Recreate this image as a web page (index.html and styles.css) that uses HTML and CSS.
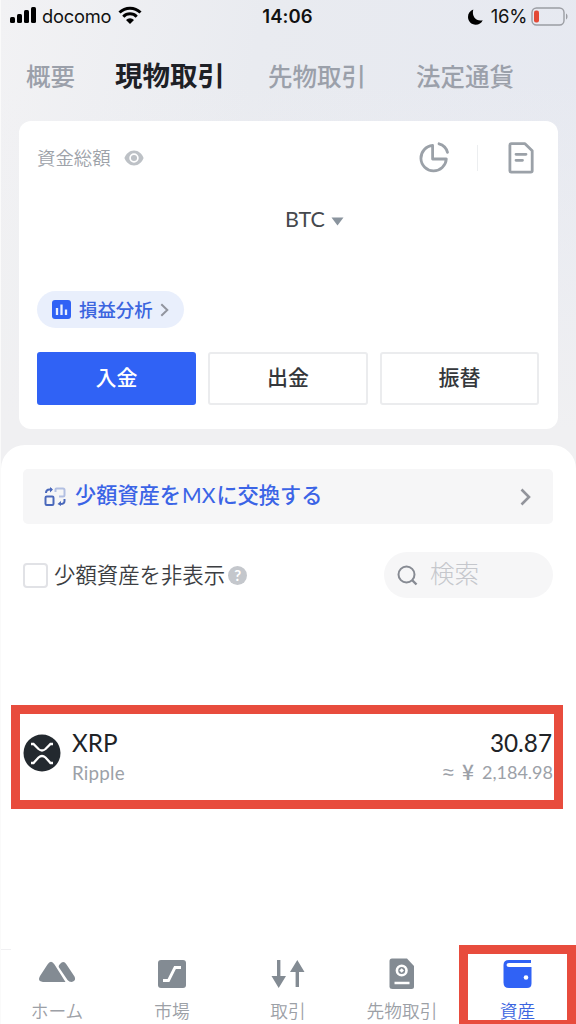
FILE: index.html
```html
<!DOCTYPE html>
<html lang="ja">
<head>
<meta charset="utf-8">
<meta name="viewport" content="width=device-width">
<title>資産</title>
<link rel="stylesheet" href="styles.css">
</head>
<body>
<div class="app">
  <header class="status">
    <div class="carrier">
      <svg width="26" height="18" viewBox="0 0 26 18"><rect x="0" y="11" width="5" height="6" rx="1.5"/><rect x="7" y="8" width="5" height="9" rx="1.5"/><rect x="14" y="4" width="5" height="13" rx="1.5"/><rect x="21" y="1" width="5" height="16" rx="1.5"/></svg>
      <span class="carrier-name">docomo</span>
      <svg class="wifi" width="24" height="18" viewBox="0 0 24 18"><g fill="none" stroke="#000" stroke-width="3"><path d="M1.500 6.500a15 15 0 0 1 21 0"/><path d="M5.300 10.700a9.300 9.300 0 0 1 13.400 0"/></g><path d="M8 14a5.700 5.700 0 0 1 8 0l-4 4z"/></svg>
    </div>
    <div class="clock">14:06</div>
    <div class="power">
      <svg width="15" height="16" viewBox="0 0 15 16"><path d="M5.300.6C1.800 2 0 4.800 0 8c0 4.400 3.400 7.700 7.700 7.700 3.200 0 5.800-1.700 7-4.500C9.200 13 3.200 8.300 5.300.6z"/></svg>
      <span class="percent">16%</span>
      <svg width="37" height="19" viewBox="0 0 37 19"><rect x="1" y="1" width="32" height="17" rx="4.500" fill="none" stroke="#9b9da3" stroke-width="1.400"/><rect x="3" y="3.500" width="5" height="12" rx="2" fill="#e34a36"/><path d="M35 6.500c2 1 2 5 0 6z" fill="#9b9da3"/></svg>
    </div>
  </header>

  <nav class="tabs">
    <a>概要</a><a class="tab-on">現物取引</a><a>先物取引</a><a>法定通貨</a>
  </nav>

  <section class="card">
    <div class="card-head">
      <span class="total">資金総額</span>
      <svg class="eye" width="20" height="16" viewBox="0 0 20 16"><path d="M10 .5c4.500 0 8 3.200 9.600 7.500C18 12.300 14.500 15.500 10 15.500S2 12.300.4 8C2 3.700 5.500.5 10 .5z" fill="#bdc1c6"/><circle cx="10" cy="8" r="3.900" fill="none" stroke="#fff" stroke-width="1.700"/></svg>
      <svg class="pie" width="32" height="32" viewBox="0 0 32 32" fill="none" stroke="#9ba1a8" stroke-width="2.800" stroke-linejoin="round" stroke-linecap="round"><path d="M14.600 4.500A12.700 12.700 0 1 0 28.300 18H14.600z"/><path d="M21 2.800a12 12 0 0 1 8.500 8.500"/></svg>
      <span class="divider"></span>
      <svg class="doc" width="26" height="32" viewBox="0 0 26 32" fill="none" stroke="#9ba1a8" stroke-width="2.800" stroke-linejoin="round"><path d="M3.500 1.700h13.500l7.200 7.100v20q0 1.300-1.400 1.300H3.300q-1.400 0-1.400-1.300V3.200q0-1.500 1.600-1.500z"/><path d="M8 12.300h10M8 18.300h6.500" stroke-linecap="round"/></svg>
    </div>
    <div class="currency"><span>BTC</span><svg width="13" height="9" viewBox="0 0 13 9"><path d="M.5.5h12l-6 8z" fill="#8a949e"/></svg></div>
    <div class="analysis">
      <svg width="19" height="19" viewBox="0 0 19 19"><rect width="19" height="19" rx="3" fill="#3062f5"/><path d="M5 8v7M9.500 4.500V15M14 9.500V15" stroke="#e9effd" stroke-width="2.300"/></svg>
      <span>損益分析</span>
      <svg class="small-arrow" width="9" height="14" viewBox="0 0 9 14"><path d="M1.300 1.200 7.300 7l-6 5.800" fill="none" stroke="#92959f" stroke-width="2"/></svg>
    </div>
    <div class="actions"><button class="primary">入金</button><button>出金</button><button>振替</button></div>
  </section>

  <main class="sheet">
    <div class="convert">
      <svg width="22" height="20" viewBox="0 0 22 20" fill="none" stroke="#4a68bb" stroke-width="2"><rect x="1.500" y="9.500" width="8" height="8.500" rx="1.200"/><path d="M2 6q0-3.500 3.500-3.500H8"/><path d="M6 0l3 2.500-3 3z" fill="#4a68bb" stroke="none"/><path d="M11.500 5V2.500Q11.500 1.500 12.500 1.500h6.500q1.500 0 1.500 1.500v5q0 1.500-1.500 1.500h-4" stroke="#b2bfe2"/><path d="M20.500 12v2q0 3-4 3"/><path d="M17 14v5l-3.500-2z" fill="#4a68bb" stroke="none"/></svg>
      <span class="convert-text">少額資産を<span class="latin">MX</span>に交換する</span>
      <svg width="11" height="18" viewBox="0 0 11 18"><path d="M1.500 1.500 9 9l-7.500 7.500" fill="none" stroke="#92949b" stroke-width="2.600"/></svg>
    </div>
    <div class="filter">
      <span class="checkbox"></span>
      <span class="filter-label">少額資産を非表示</span>
      <span class="help">?</span>
      <div class="search"><svg width="21" height="21" viewBox="0 0 21 21" fill="none" stroke="#878b93" stroke-width="2"><circle cx="9.500" cy="9.500" r="8"/><path d="m15 15 4.500 4.500" stroke-width="2.400"/></svg><span>検索</span></div>
    </div>
    <div class="asset">
      <svg width="38" height="38" viewBox="0 0 38 38"><circle cx="19" cy="19" r="18.500" fill="#23292f"/><g fill="none" stroke="#fff" stroke-width="2.300"><path d="M8 10h2.500l5 5q3.500 3 7 0l5-5H30"/><path d="M8 29h2.500l5-5.500q3.500-3 7 0l5 5.500H30"/></g></svg>
      <div class="coin"><div class="symbol">XRP</div><div class="sub ripple">Ripple</div></div>
      <div class="balance"><div class="symbol">30.87</div><div class="sub fiat"><span class="approx">≈</span><span class="yen">¥</span><span>2,184.98</span></div></div>
    </div>
  </main>

  <footer class="bottom-nav">
    <a><svg width="38" height="32" viewBox="0 0 38 32"><path d="M9.500 6.500q3.500-5.500 7 0L27.500 24H5Q-1 23.500 2 18z" fill="#838b93"/><path d="M22 6q3.500-4 6.500.5l8 12q2 4.500-3 5.500-2.500 0-4-2L21 9.500q-1-1.500 1-3.500z" fill="#838b93"/></svg><span>ホーム</span></a>
    <a><svg width="28" height="32" viewBox="0 0 28 32"><rect y="2" width="28" height="28" rx="3" fill="#838b93"/><path d="M5 22.500h5.500l6.500-13h6" fill="none" stroke="#fff" stroke-width="2.800"/></svg><span>市場</span></a>
    <a><svg width="34" height="32" viewBox="0 0 34 32" fill="#838b93"><path d="M6 2h3.400v16H15L7.700 30 .5 18H6zM24.600 29V14H19l7.300-12 7.200 12H28v15z"/></svg><span>取引</span></a>
    <a><svg width="26" height="32" viewBox="0 0 26 32"><path d="M3 .5h15l7 7.500v20.500q0 2.500-2.500 2.500h-19Q.5 31 .5 28.500V3Q.5.5 3 .5z" fill="#838b93"/><circle cx="12.700" cy="12.500" r="4.800" fill="none" stroke="#fff" stroke-width="2.600"/><path d="m12.700 10.200 2.300 2.300-2.300 2.300-2.300-2.300z" fill="#fff"/><path d="M5.500 25h15" stroke="#fff" stroke-width="2.500"/></svg><span>先物取引</span></a>
    <a class="nav-on"><svg width="29" height="32" viewBox="0 0 29 32"><path d="M28 2H6Q.5 2 .5 7v17.500Q.5 30 6 30h18q4.500 0 4.500-4.500V9H6Q3.500 9 3.500 7T6 5h22z" fill="#3062f5"/><circle cx="23" cy="19.500" r="2.300" fill="#fff"/></svg><span>資産</span></a>
  </footer>
</div>
</body>
</html>
```
FILE: styles.css
```css
* { box-sizing: border-box; }
body {
  margin: 0;
  font-family: "Noto Sans CJK JP", sans-serif;
  background: #fff;
}
svg { display: block; flex: none; }
.app {
  width: 576px;
  height: 1024px;
  overflow: hidden;
  display: flex;
  flex-direction: column;
  background: linear-gradient(180deg, rgba(240, 240, 242, 0) 80px, #f0f0f2 430px), linear-gradient(100deg, #f2f2f4 0, #e9ebf0 35%, #e5e8f1 100%);
  border-left: 1px solid #fafafa;
}
.status {
  height: 32px;
  display: grid;
  grid-template-columns: 1fr 60px 1fr;
  align-items: center;
  padding: 0 8px 0 9px;
  font: 19px/32px Inter, sans-serif;
  color: #111;
}
.carrier, .power { display: flex; align-items: center; }
.carrier-name { margin-left: 6px; font-size: 18.3px; letter-spacing: -0.2px; }
.carrier svg { margin-top: -2px; }
.carrier .wifi { margin-left: 7px; }
.clock { margin-left: -3px; text-align: center; font-weight: 600; font-size: 18.5px; letter-spacing: .1px; }
.power { justify-content: flex-end; }
.power svg:first-child { margin-top: 1px; }
.percent { margin: 0 4px 0 8px; font-size: 18.5px; letter-spacing: -0.3px; }
.tabs {
  height: 89px;
  display: flex;
  align-items: center;
  padding: 0 0 3px 25px;
  color: #9ba0aa;
  font-size: 24.5px;
  font-weight: 500;
  white-space: nowrap;
}
.tabs a { margin-right: 50px; }
.tabs .tab-on { margin: -3px 43px 0 -10px; color: #1d2026; font-size: 27.5px; font-weight: 700; }
.card {
  height: 308px;
  margin: 0 18px;
  padding: 20px 18px 0;
  border-radius: 12px;
  background: #fff;
  flex: none;
}
.card-head { height: 34px; display: flex; align-items: center; }
.total { margin-top: -2px; color: #9da2a9; font-size: 18.4px; font-weight: 350; line-height: 34px; }
.eye { margin-left: 13px; }
.pie { margin: -2px 0 0 auto; }
.divider { width: 1px; height: 26px; margin: 0 30px 0 27px; background: #eceef0; }
.doc { margin-right: 6px; }
.currency {
  height: 28px;
  margin-top: 30px;
  display: flex;
  align-items: center;
  gap: 6px;
  padding-left: 248px;
  font: 21.5px/28px Lato, sans-serif;
  color: #45484d;
}
.currency svg { margin-top: 4px; }
.analysis {
  width: 147px;
  height: 37px;
  margin-top: 58px;
  padding: 0 0 0 15px;
  display: flex;
  align-items: center;
  border-radius: 19px;
  background: #e9effc;
  color: #3b65df;
  font-size: 18.4px;
  font-weight: 500;
  white-space: nowrap;
}
.analysis span { margin: -2px 0 0 8px; }
.small-arrow { margin-left: 7px; }
.actions { display: grid; grid-template-columns: 159px 160px 159px; gap: 12px; margin-top: 24px; }
.actions button {
  height: 53px;
  padding: 0 0 4px;
  border: 2px solid #ebecee;
  border-radius: 3px;
  background: #fff;
  color: #34373b;
  font: 500 21px/45px "Noto Sans CJK JP", sans-serif;
}
.actions .primary { border-color: #3062f5; background: #3062f5; color: #fff; }
.sheet {
  flex: 1;
  margin-top: 16px;
  padding: 24px 0 0 22px;
  border-radius: 24px 24px 0 0;
  background: #fff;
}
.convert {
  width: 530px;
  height: 55px;
  padding: 0 22px 0 21px;
  display: flex;
  align-items: center;
  border-radius: 5px;
  background: #f6f6f7;
}
.convert-text { margin: -4px auto 0 9px; color: #3b64e6; font-size: 21.2px; font-weight: 500; line-height: 40px; }
.latin { padding: 0 1px; font-family: Lato, sans-serif; font-weight: 400; }
.filter { width: 530px; height: 46px; margin-top: 28px; display: flex; align-items: center; }
.checkbox { width: 25px; height: 25px; border: 2px solid #e1e2e6; border-radius: 4px; }
.filter-label { margin: -4px 0 0 6px; color: #3c3e42; font-size: 21.4px; font-weight: 350; white-space: nowrap; }
.help {
  width: 19px;
  height: 19px;
  margin-left: 3px;
  border-radius: 50%;
  background: #c4c7cc;
  color: #fff;
  text-align: center;
  font: 700 15px/19px Lato, sans-serif;
}
.search {
  width: 169px;
  height: 46px;
  margin-left: auto;
  padding-left: 13px;
  display: flex;
  align-items: center;
  gap: 12px;
  border-radius: 23px;
  background: #f6f6f7;
  color: #c5c7cc;
  font-size: 24.5px;
  font-weight: 300;
}
.search span { margin-top: -4px; line-height: 40px; }
.asset {
  width: 552px;
  height: 104px;
  margin: 107px 0 0 -12px;
  padding: 0 2px 0 3px;
  display: flex;
  align-items: center;
  border: 9px solid #e84c3d;
  font-family: Lato, sans-serif;
}
.asset > svg { margin-top: -8px; }
.coin { margin-left: 11px; }
.balance { margin-left: auto; text-align: right; }
.symbol { height: 30px; color: #202327; font-size: 24.3px; line-height: 30px; }
.sub { height: 29px; color: #9ca1a8; font-size: 18.3px; line-height: 29px; }
.ripple { font-size: 18.8px; letter-spacing: .2px; }
.fiat { display: flex; justify-content: flex-end; margin-right: -1px; font-size: 18px; }
.approx { margin-right: 8px; font-family: "Liberation Sans", sans-serif; font-size: 20px; }
.yen { margin-right: 8px; font-family: "Noto Sans CJK JP", sans-serif; font-size: 21px; font-weight: 500; line-height: 27px; }
.bottom-nav {
  height: 79px;
  flex: none;
  display: grid;
  grid-template: 79px / 112px 118px 114px 114px 117px;
  background: #fff;
}
.bottom-nav a {
  display: flex;
  flex-direction: column;
  align-items: center;
  padding-top: 13px;
  color: #9ca0a6;
  font-size: 17.7px;
  font-weight: 350;
  white-space: nowrap;
}
.bottom-nav a:first-child { border-top: 0; background: linear-gradient(#f0f0f2, #f0f0f2) 0 4px / 10px 1px no-repeat; }
.bottom-nav span { margin-top: 7px; line-height: 26px; }
.bottom-nav .nav-on { height: 79px; padding-top: 4px; border: 9px solid #e84c3d; border-bottom-width: 4px; color: #3b65df; }
```
